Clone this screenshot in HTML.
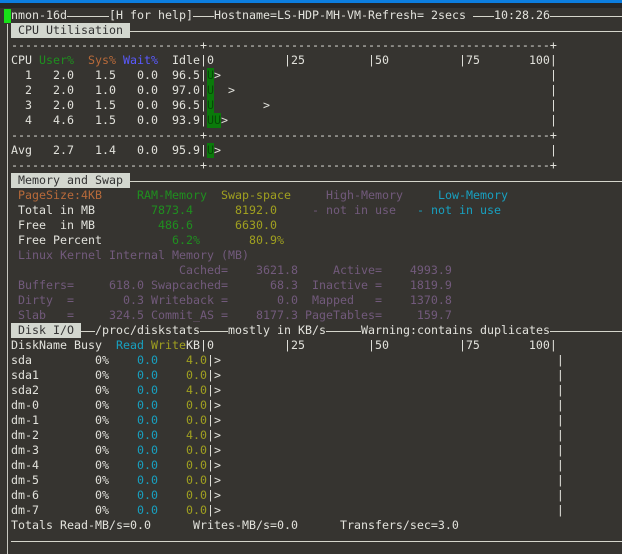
<!DOCTYPE html>
<html><head><meta charset="utf-8"><style>
html,body{margin:0;padding:0}
body{width:622px;height:554px;background:#363430;position:relative;overflow:hidden;font-family:"DejaVu Sans Mono","Liberation Mono",monospace;font-size:11.63px;color:#e2e2dc}
.s{position:absolute;white-space:pre;height:15px;line-height:15px;background:#363430}
.ln{position:absolute;height:1px;background:#d6d6cc;right:0}
.box{background:#d3d7cf;color:#333}
.g{color:#1f8f1f}.o{color:#b86a3a}.b{color:#5a5aff}.y{color:#a0a020}.p{color:#725a7c}.c{color:#18a0c0}
.u{position:absolute;background:#0a7a0a;color:#064a06;width:7px;line-height:15px;height:15px;white-space:pre}
</style></head><body>
<div style="position:absolute;left:0;top:0;width:622px;height:3px;background:#0c7ee0"></div>
<div style="position:absolute;left:0;top:3px;width:622px;height:5px;background:#262626"></div>
<div style="position:absolute;left:7px;top:24px;width:1px;height:530px;background:#c8c8c0"></div>
<div style="position:absolute;left:4px;top:9px;width:7px;height:14px;background:#18e018"></div>
<div class="ln" style="left:11px;top:16px"></div>
<div class="ln" style="left:130px;top:31px"></div>
<div class="ln" style="left:130px;top:181px"></div>
<div class="ln" style="left:81px;top:331px"></div>
<div class="ln" style="left:11px;top:541px"></div>

<div class="s" style="left:11px;top:8px">nmon-16d</div>
<div class="s" style="left:109px;top:8px">[H for help]</div>
<div class="s" style="left:214px;top:8px">Hostname=LS-HDP-MH-VM-Refresh= 2secs </div>
<div class="s" style="left:494px;top:8px">10:28.26</div>

<div class="s box" style="left:11px;top:23px;width:119px"> CPU Utilisation</div>
<div class="s" style="left:11px;top:38px">---------------------------+-------------------------------------------------+</div>
<div class="s" style="left:11px;top:53px">CPU <span class="g">User%</span>  <span class="o">Sys%</span> <span class="b">Wait%</span>  Idle|0          |25         |50          |75       100|</div>
<div class="s" style="left:11px;top:68px">  1   2.0   1.5   0.0  96.5|</div>
<div class="s" style="left:11px;top:83px">  2   2.0   1.0   0.0  97.0|</div>
<div class="s" style="left:11px;top:98px">  3   2.0   1.5   0.0  96.5|</div>
<div class="s" style="left:11px;top:113px">  4   4.6   1.5   0.0  93.9|</div>
<div class="u" style="left:207px;top:68px">U</div>
<div class="u" style="left:207px;top:83px">U</div>
<div class="u" style="left:207px;top:98px">U</div>
<div class="u" style="left:207px;top:113px">U</div>
<div class="u" style="left:214px;top:113px">U</div>
<div class="s" style="left:214px;top:68px">&gt;</div>
<div class="s" style="left:228px;top:83px">&gt;</div>
<div class="s" style="left:263px;top:98px">&gt;</div>
<div class="s" style="left:221px;top:113px">&gt;</div>
<div class="s" style="left:550px;top:68px">|</div>
<div class="s" style="left:550px;top:83px">|</div>
<div class="s" style="left:550px;top:98px">|</div>
<div class="s" style="left:550px;top:113px">|</div>
<div class="s" style="left:11px;top:128px">---------------------------+-------------------------------------------------+</div>
<div class="s" style="left:11px;top:143px">Avg   2.7   1.4   0.0  95.9|</div>
<div class="u" style="left:207px;top:143px">U</div>
<div class="s" style="left:214px;top:143px">&gt;</div>
<div class="s" style="left:550px;top:143px">|</div>
<div class="s" style="left:11px;top:158px">---------------------------+-------------------------------------------------+</div>

<div class="s box" style="left:11px;top:173px;width:119px"> Memory and Swap</div>
<div class="s" style="left:18px;top:188px"><span class="o">PageSize:4KB</span>     <span class="g">RAM-Memory</span>  <span class="y">Swap-space</span>     <span class="p">High-Memory</span>     <span class="c">Low-Memory</span></div>
<div class="s" style="left:18px;top:203px">Total in MB        <span class="g">7873.4</span>      <span class="y">8192.0</span>     <span class="p">- not in use</span>   <span class="c">- not in use</span></div>
<div class="s" style="left:18px;top:218px">Free  in MB         <span class="g">486.6</span>      <span class="y">6630.0</span></div>
<div class="s" style="left:18px;top:233px">Free Percent          <span class="g">6.2%</span>       <span class="y">80.9%</span></div>
<div class="s p" style="left:18px;top:248px">Linux Kernel Internal Memory (MB)</div>
<div class="s p" style="left:18px;top:263px">                       Cached=    3621.8     Active=    4993.9</div>
<div class="s p" style="left:18px;top:278px">Buffers=     618.0 Swapcached=      68.3  Inactive =    1819.9</div>
<div class="s p" style="left:18px;top:293px">Dirty  =       0.3 Writeback =       0.0  Mapped   =    1370.8</div>
<div class="s p" style="left:18px;top:308px">Slab   =     324.5 Commit_AS =    8177.3 PageTables=     159.7</div>

<div class="s box" style="left:11px;top:323px;width:70px"> Disk I/O</div>
<div class="s" style="left:95px;top:323px">/proc/diskstats</div>
<div class="s" style="left:228px;top:323px">mostly in KB/s</div>
<div class="s" style="left:361px;top:323px">Warning:contains duplicates</div>
<div class="s" style="left:11px;top:338px">DiskName Busy  <span class="c">Read</span> <span class="y">Write</span>KB|0          |25         |50          |75       100|</div>
<div class="s" style="left:11px;top:353px">sda         0%    <span class="c">0.0</span>    <span class="y">4.0</span>|&gt;                                                |</div>
<div class="s" style="left:11px;top:368px">sda1        0%    <span class="c">0.0</span>    <span class="y">0.0</span>|&gt;                                                |</div>
<div class="s" style="left:11px;top:383px">sda2        0%    <span class="c">0.0</span>    <span class="y">4.0</span>|&gt;                                                |</div>
<div class="s" style="left:11px;top:398px">dm-0        0%    <span class="c">0.0</span>    <span class="y">0.0</span>|&gt;                                                |</div>
<div class="s" style="left:11px;top:413px">dm-1        0%    <span class="c">0.0</span>    <span class="y">0.0</span>|&gt;                                                |</div>
<div class="s" style="left:11px;top:428px">dm-2        0%    <span class="c">0.0</span>    <span class="y">4.0</span>|&gt;                                                |</div>
<div class="s" style="left:11px;top:443px">dm-3        0%    <span class="c">0.0</span>    <span class="y">0.0</span>|&gt;                                                |</div>
<div class="s" style="left:11px;top:458px">dm-4        0%    <span class="c">0.0</span>    <span class="y">0.0</span>|&gt;                                                |</div>
<div class="s" style="left:11px;top:473px">dm-5        0%    <span class="c">0.0</span>    <span class="y">0.0</span>|&gt;                                                |</div>
<div class="s" style="left:11px;top:488px">dm-6        0%    <span class="c">0.0</span>    <span class="y">0.0</span>|&gt;                                                |</div>
<div class="s" style="left:11px;top:503px">dm-7        0%    <span class="c">0.0</span>    <span class="y">0.0</span>|&gt;                                                |</div>
<div class="s" style="left:11px;top:518px">Totals Read-MB/s=0.0      Writes-MB/s=0.0      Transfers/sec=3.0</div>
</body></html>
